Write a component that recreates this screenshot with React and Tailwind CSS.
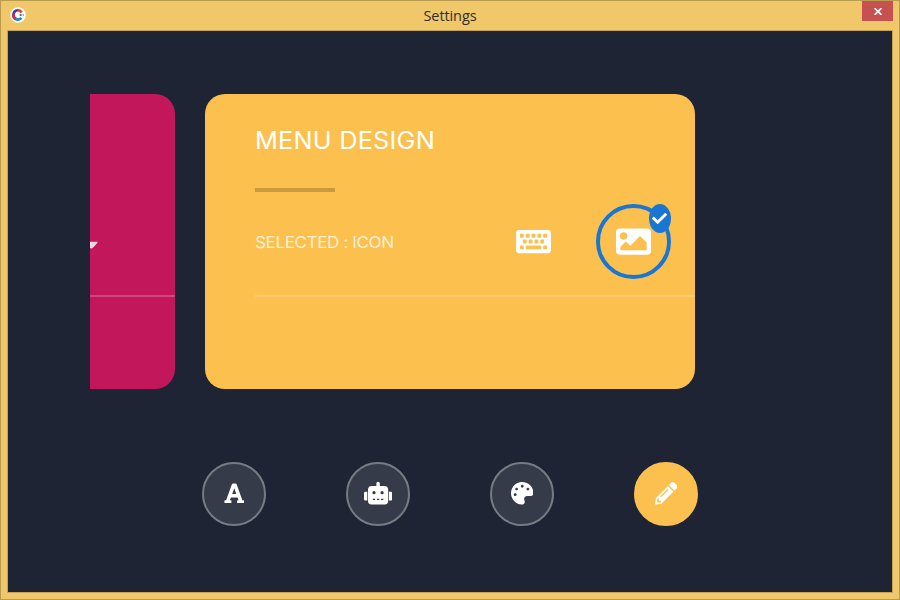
import React from "react";
import { FaFont, FaPalette, FaPencilAlt, FaKeyboard, FaImage, FaCheck } from "react-icons/fa";

function RobotIcon(props) {
  return (
    <svg viewBox="0 0 28.2 22.5" fill="currentColor" {...props}>
      <path d="M12.4 1.6a1.7 1.7 0 0 1 3.4 0V3.9h4.6a3.8 3.8 0 0 1 3.8 3.8V19a3.5 3.5 0 0 1-3.5 3.5H7.5A3.5 3.5 0 0 1 4 19V7.7a3.8 3.8 0 0 1 3.8-3.8h4.6Z" />
      <path d="M3.3 9.8V18.6H1.4A1.4 1.4 0 0 1 0 17.2V11.2A1.4 1.4 0 0 1 1.4 9.8ZM24.9 9.8h1.9a1.4 1.4 0 0 1 1.4 1.4v6a1.4 1.4 0 0 1-1.4 1.4H24.9Z" />
      <g fill="#353b48">
        <circle cx="10" cy="10.7" r="1.6" />
        <circle cx="18.1" cy="10.7" r="1.6" />
        <path d="M8.8 16.7h2.3v1.2H8.8ZM12.9 16.7h2.3v1.2h-2.3ZM17 16.7h2.3v1.2H17Z" />
      </g>
    </svg>
  );
}

const tabs = [
  { name: "font", Icon: FaFont, width: 20.5 },
  { name: "bot", Icon: RobotIcon, width: 28.2 },
  { name: "palette", Icon: FaPalette, width: 22.5 },
  { name: "design", Icon: FaPencilAlt, width: 22.5, active: true },
];

function Logo() {
  return (
    <svg width="16" height="16" viewBox="0 0 16 16" fill="none">
      <circle cx="8" cy="8" r="7.8" fill="#fff" />
      <path d="M4 9.5A4.6 4.6 0 0 1 4.8 4.3" stroke="#6b2f8f" strokeWidth="2.5" />
      <path d="M4.2 5A4.6 4.6 0 0 1 8 3.2" stroke="#3b3f94" strokeWidth="2.6" />
      <path d="M7.6 3.2A4.6 4.6 0 0 1 11.6 5.4" stroke="#e0433f" strokeWidth="2.8" />
      <path d="M3.4 7.5A4.6 4.6 0 0 0 6.6 12.2" stroke="#cf2459" strokeWidth="2.8" />
      <path d="M6.2 12.1A4.6 4.6 0 0 0 11.4 10.9" stroke="#1597b8" strokeWidth="2.8" />
      <circle cx="10.5" cy="8" r="1" fill="#555d70" />
      <path d="M11 8H14" stroke="#8d93a0" strokeWidth="1.3" strokeDasharray="1.2 .6" />
    </svg>
  );
}

function TitleBar() {
  return (
    <header className="grid h-[29px] shrink-0 grid-cols-3 items-start">
      <div className="pt-[6px] pl-[9px]"><Logo /></div>
      <h1 className="pt-[5px] text-center font-['Open_Sans','Noto_Sans',sans-serif] text-[14.5px] leading-5 tracking-[-0.1px] text-[#302d27]">Settings</h1>
      <button aria-label="Close" className="mr-[6px] flex h-5 w-[31px] items-center justify-center justify-self-end bg-[#c75050]">
        <svg width="8" height="7" viewBox="0 0 8 7" className="mt-px">
          <path d="M.6 .2L7.4 6.8M7.4 .2L.6 6.8" stroke="#fff" strokeWidth="1.8" />
        </svg>
      </button>
    </header>
  );
}

function DesignCard() {
  return (
    <section className="h-[295px] w-[490px] shrink-0 rounded-[20px] bg-[#fcc04e] pl-[50px] text-white">
      <h2 className="w-fit origin-left scale-x-[1.055] pt-[31px] font-['Inter',sans-serif] text-[24px] leading-[32px] tracking-[0.2px] whitespace-nowrap">MENU DESIGN</h2>
      <div className="mt-[31px] h-1 w-20 bg-[#ca9a3e]" />
      <div className="mt-[7px] flex h-[84px] items-center">
        <div className="w-[224px] pt-px">
          <p className="w-fit origin-left scale-x-[1.07] font-['Inter',sans-serif] text-[16px] leading-6 tracking-[-0.4px] whitespace-nowrap text-[#fff0d3]">SELECTED : ICON</p>
        </div>
        <div className="-ml-px flex w-[110px] items-center justify-center">
          <FaKeyboard className="h-[31px] w-[35px]" />
        </div>
        <div className="relative ml-[7.5px] flex size-[75px] items-center justify-center rounded-full border-4 border-[#1976d2]">
          <FaImage className="size-[35px]" />
          <span className="absolute -top-[4px] -right-[4px] flex h-[29px] w-[22px] items-center justify-center rounded-[50%] bg-[#1976d2]">
            <FaCheck className="size-[15px]" />
          </span>
        </div>
      </div>
      <div className="mt-[12px] h-[2px] bg-[#fdcc70]" />
    </section>
  );
}

export default function App() {
  return (
    <div className="flex h-[600px] w-[900px] flex-col overflow-hidden border border-[#b99b52] bg-[#f0c869]">
      <TitleBar />
      <main className="mx-[6px] mb-[6px] flex grow flex-col border border-[#c5a356] bg-[#1e2433]">
        <div className="mt-[63px] ml-[82px] flex gap-[30px] overflow-hidden">
          <section className="h-[295px] w-[85px] rounded-r-[20px] bg-[#c2185b] pt-[147px]">
            <svg width="8" height="8" viewBox="0 0 8 8" className="block">
              <path d="M0 .8H7.2Q8 .8 7.4 1.7L3 6.8Q1.7 8 0 7Z" fill="#f6d5e1" />
            </svg>
            <div className="mt-[46px] h-[2px] bg-[#cf477c]" />
          </section>
          <DesignCard />
        </div>
        <nav className="mt-[73px] ml-[194px] flex gap-[80px]">
          {tabs.map(({ name, Icon, width, active }) => (
            <button
              key={name}
              aria-label={name}
              className={`flex size-16 items-center justify-center rounded-full border-2 pb-px text-white ${active ? "border-[#fcc04e] bg-[#fcc04e]" : "border-[#777b83] bg-[#353b48]"}`}
            >
              <Icon style={{ width, height: 22.5 }} />
            </button>
          ))}
        </nav>
      </main>
    </div>
  );
}
